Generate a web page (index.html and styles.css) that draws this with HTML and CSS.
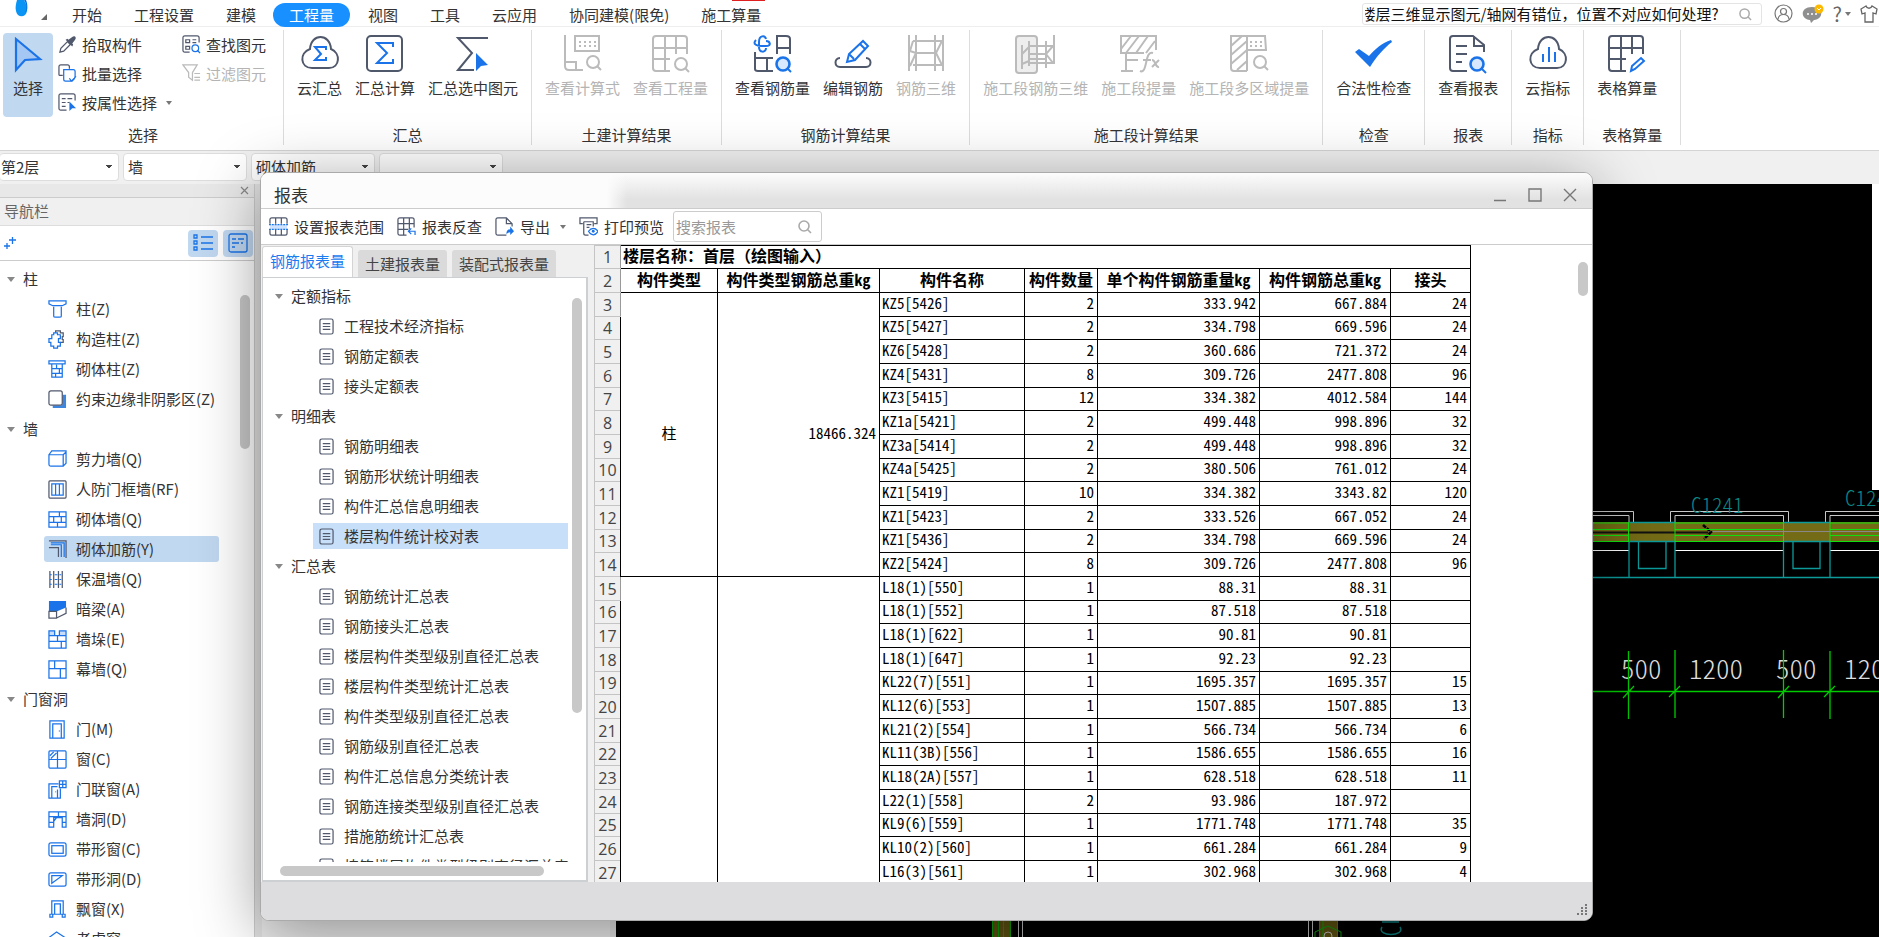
FILE: index.html
```html
<!DOCTYPE html>
<html lang="zh-CN">
<head>
<meta charset="utf-8">
<title>报表</title>
<link rel="stylesheet" href="styles.css">
</head>
<body>
<svg class="defs" aria-hidden="true">
  <symbol id="doc" viewBox="0 0 16 18"><rect x="1" y="1" width="14" height="16" rx="2" class="d"/><path class="d" d="M4 6h8M4 9h8M4 12h8"/></symbol>
  <symbol id="mag" viewBox="0 0 14 14"><circle cx="6" cy="6" r="5" fill="none" stroke="#aaa" stroke-width="1.6"/><path d="M9.5 9.5l3.500 3.500" stroke="#aaa" stroke-width="1.600"/></symbol>
</svg>
<div class="app">
  <header class="menubar">
    <svg class="logo" viewBox="0 0 50 26"><path d="M17 0h7c2 4 4 7 3 11-1 7-10 7-11 0-1-4 0-7 1-11z" fill="#0a95f5"/><path d="M24 0c3 5 3 9 1 13 3-3 3-8 1-13z" fill="#0a6fe0"/><path d="M47 14v6h-6z" fill="#666"/></svg>
    <nav class="menus">
      <a href="#">开始</a><a href="#">工程设置</a><a href="#">建模</a><a href="#" class="active">工程量</a><a href="#">视图</a><a href="#">工具</a><a href="#">云应用</a><a href="#">协同建模(限免)</a><a href="#" class="hot">施工算量</a>
    </nav>
    <label class="help"><input type="text" aria-label="帮助搜索" value="楼层三维显示图元/轴网有错位，位置不对应如何处理?"><svg width="13" height="13"><use href="#mag"/></svg></label>
    <div class="tools">
      <button aria-label="用户"><svg width="19" height="19" viewBox="0 0 19 19" fill="none" stroke="#777" stroke-width="1.200"><circle cx="9.500" cy="9.500" r="8.500"/><circle cx="9.500" cy="7.500" r="3"/><path d="M4 15c1-6 10-6 11 0"/></svg></button>
      <button aria-label="消息"><svg width="22" height="20" viewBox="0 0 22 20"><path d="M10 3c12 0 12 12 2 13l-3 3-1-3C-2 15-2 3 10 3z" fill="#8f8f8f"/><circle cx="6" cy="10" r="1" fill="#fff"/><circle cx="10" cy="10" r="1" fill="#fff"/><circle cx="14" cy="10" r="1" fill="#fff"/><circle cx="17" cy="5" r="4.500" fill="#fcb900"/><path d="M15 4l2 2 2-2" stroke="#fff" fill="none"/></svg></button>
      <button aria-label="帮助" class="q">?<i class="caret"></i></button>
      <button aria-label="皮肤"><svg width="18" height="18" viewBox="0 0 18 18" fill="none" stroke="#666" stroke-width="1.300"><path d="M6 1L1 4l1 5 3-1v9h8V8l3 1 1-5-5-3c-1 3-5 3-6 0z"/></svg></button>
    </div>
  </header>

  <section class="ribbon">
    <div class="group select">
      <div class="cols">
        <button class="big on"><svg viewBox="0 0 38 38"><path d="M7 2v31l9-10 15-1z" fill="#a4c8f3" stroke="#1a73e8" stroke-width="2.200"/></svg>选择</button>
        <div class="stack first">
          <button><svg viewBox="0 0 20 20"><path d="M2 18l1-4 7-7 3 3-7 7z" class="d"/><path d="M8 5l7 7 1-2-1-1 3-4c2-3-1-5-3-3l-4 3-1-1z" fill="#50586c"/></svg>拾取构件</button>
          <button><svg viewBox="0 0 20 20"><path class="d" d="M5 12H2q-1 0-1-1V3q0-2 2-2h7q2 0 2 2v2"/><path class="b" d="M6 6h10q2 0 2 2v5q0 3-3 5h-7q-2 0-2-2zM12 15l2 3 5-5"/></svg>批量选择</button>
          <button><svg viewBox="0 0 20 20"><path class="d" d="M9 18H3q-2 0-2-2V3q0-2 2-2h13q2 0 2 2v5M4 6h4M10 6h5M4 10h4M4 14h4M10 10h2"/><path d="M12 9v10l3-3h4z" fill="#1a73e8"/></svg>按属性选择<i class="caret"></i></button>
        </div>
        <div class="stack">
          <button><svg viewBox="0 0 20 20"><path class="d" d="M8 18H3q-2 0-2-2V3q0-2 2-2h13q2 0 2 2v5M4 5h4v3H4zM4 12h4v3H4zM11 5h4M11 8h4"/><circle cx="14" cy="14" r="3.500" class="b"/><path class="b" d="M16 16l3 3"/></svg>查找图元</button>
          <button disabled><svg viewBox="0 0 20 20"><path class="g" d="M1 1h15l-5 8v8l-4-3V9zM13 10h6M13 14h6M13 17h6"/></svg>过滤图元</button>
        </div>
      </div>
      <span>选择</span>
    </div>
    <div class="group">
      <div class="cols">
        <button class="big"><svg viewBox="0 0 38 38"><path class="d2" d="M9 15C10-1 29-1 30 15c10 4 9 19-2 19H11C-1 34-2 19 9 15z"/><path class="b2" d="M25 16v-3H14l6 7-6 6h11v-3"/></svg>云汇总</button>
        <button class="big"><svg viewBox="0 0 38 38"><rect class="d2" x="1" y="2" width="35" height="35" rx="4"/><path class="b2" d="M27 13V9H11l10 10-10 10h16v-4"/></svg>汇总计算</button>
        <button class="big"><svg viewBox="0 0 38 38"><path class="d2" d="M34 4H4l14 15L4 36h16"/><path d="M22 19l12 12-7 1-5 5z" fill="#1a73e8"/></svg>汇总选中图元</button>
      </div>
      <span>汇总</span>
    </div>
    <div class="group">
      <div class="cols">
        <button class="big" disabled><svg viewBox="0 0 38 38"><path class="g2" d="M1 1v31q0 4 4 4h14M1 28h11v8M11 2h24v15H11z"/><path stroke="#bbb" stroke-width="2" stroke-dasharray="2 3" d="M15 8h17M15 12h17"/><circle class="g2" cx="29" cy="28" r="6"/><path class="g2" d="M33 32l4 4"/></svg>查看计算式</button>
        <button class="big" disabled><svg viewBox="0 0 38 38"><path class="g2" d="M18 37H4q-3 0-3-3V5q0-3 3-3h28q3 0 3 3v15M1 14h34M1 25h17M13 2v35M24 2v18"/><circle class="g2" cx="29" cy="30" r="6"/><path class="g2" d="M33 34l4 4"/></svg>查看工程量</button>
      </div>
      <span>土建计算结果</span>
    </div>
    <div class="group">
      <div class="cols">
        <button class="big"><svg viewBox="0 0 38 38"><path class="b2" d="M12 5c-1-4-7-4-7 3v5c0 6 7 6 7 1M2 6c-4 4 1 6 5 6h5c6 0 4-5 0-5"/><path class="d2" d="M23 20V2h9q4 0 4 3v15M23 14h13M1 18v17q0 2 3 2h15M1 24h18M13 24v13"/><circle cx="29" cy="30" r="6.500" fill="#d8e8ff" stroke="#1a73e8" stroke-width="2.600"/><path class="b2" d="M33 34l4 4"/></svg>查看钢筋量</button>
        <button class="big"><svg viewBox="0 0 38 38"><path class="d2" d="M6 24c-6 0-6 9 0 9h26c6 0 6-9 0-9"/><path class="b2" d="M13 28l2-8L29 7l5 5-13 14zM26 10l5 5M15 20l5 5"/></svg>编辑钢筋</button>
        <button class="big" disabled><svg viewBox="0 0 38 38"><path class="g2" d="M2 1v36M9 1v36M28 1v36M36 1v36M6 7h29l-6 12 6 12H6M6 7l-3 10 6 2h19M3 32l6-13"/></svg>钢筋三维</button>
      </div>
      <span>钢筋计算结果</span>
    </div>
    <div class="group">
      <div class="cols">
        <button class="big" disabled><svg viewBox="0 0 38 38"><rect x="-1" y="2" width="21" height="37" rx="3" fill="#eee" stroke="#bbb" stroke-width="2"/><path class="g2" d="M5 11v24M12 7v25M29 7v27M37 1v29M12 12h24l-7 8 7 9H12M5 20l7-7M12 20h17M12 25h17M5 30l7-3"/></svg>施工段钢筋三维</button>
        <button class="big" disabled><svg viewBox="0 0 38 38"><path class="g2" d="M36 16V2H1v17h23M1 15L11 2M6 19L19 2M16 19L28 2M26 19l9-12M6 20v17M1 37h12M6 26h12"/><path class="g2" d="M33 19c-6-2-6 8-8 14-1 4-3 5-5 4M23 26h8M32 26c4 0 3 8 7 7M39 26l-7 7"/></svg>施工段提量</button>
        <button class="big" disabled><svg viewBox="0 0 38 38"><path class="g2" d="M17 37H4q-3 0-3-3V2h34l1 14H17M17 2v35M1 12L12 2M1 21L17 7M1 30l16-14M7 36l10-9"/><path stroke="#bbb" stroke-width="2" stroke-dasharray="2 3" d="M20 8h13M20 12h13"/><circle class="g2" cx="30" cy="28" r="6"/><path class="g2" d="M34 32l4 4"/></svg>施工段多区域提量</button>
      </div>
      <span>施工段计算结果</span>
    </div>
    <div class="group">
      <div class="cols"><button class="big"><svg viewBox="0 0 38 38"><path d="M0 18l4-3 10 7C20 15 27 9 36 6l1 2C29 14 22 22 15 33z" fill="#1a73e8"/></svg>合法性检查</button></div>
      <span>检查</span>
    </div>
    <div class="group">
      <div class="cols"><button class="big"><svg viewBox="0 0 38 38"><path class="d2" d="M18 37H4q-3 0-3-3V5q0-3 3-3h20l11 9v7M25 2v10h10M7 12h11M7 20h11M7 28h6"/><circle cx="28" cy="30" r="6.500" fill="#d8e8ff" stroke="#1a73e8" stroke-width="2.600"/><path class="b2" d="M32 34l5 5"/></svg>查看报表</button></div>
      <span>报表</span>
    </div>
    <div class="group">
      <div class="cols"><button class="big"><svg viewBox="0 0 38 38"><path class="d2" d="M9 15C10-1 29-1 30 15c10 4 9 19-2 19H11C-1 34-2 19 9 15z"/><path class="b2" d="M14 20v8M20 13v15M26 18v10"/></svg>云指标</button></div>
      <span>指标</span>
    </div>
    <div class="group last">
      <div class="cols"><button class="big"><svg viewBox="0 0 38 38"><path class="d2" d="M18 37H4q-3 0-3-3V5q0-3 3-3h28q3 0 3 3v15M1 14h34M1 25h17M13 2v35M24 2v18"/><path class="b2" d="M23 37l1-5 9-8 3 3-9 8z"/></svg>表格算量</button></div>
      <span>表格算量</span>
    </div>
  </section>

  <div class="combos">
    <select aria-label="楼层"><option>第2层</option></select>
    <select aria-label="构件类别"><option>墙</option></select>
    <select aria-label="构件类型"><option>砌体加筋</option></select>
    <select aria-label="构件"><option></option></select>
  </div>

  <main class="work">
    <aside class="nav">
      <div class="navtop"><button aria-label="关闭"><svg width="9" height="9" viewBox="0 0 9 9"><path d="M1 1l7 7M8 1L1 8" stroke="#888" stroke-width="1.200"/></svg></button></div>
      <h2>导航栏</h2>
      <div class="navbar">
        <svg width="14" height="16" viewBox="0 0 14 16"><path class="b" d="M6 5h7M9.500 2v7M1 11h6M4 8v6"/></svg>
        <button aria-label="列表"><svg width="22" height="20" viewBox="0 0 22 20"><path class="b" d="M2 2h3v3H2zM2 8h3v3H2zM2 14h3v3H2zM9 4h12M9 10h12M9 16h12"/></svg></button>
        <button aria-label="详情"><svg width="20" height="20" viewBox="0 0 20 20"><rect class="b" x="1" y="1" width="18" height="18" rx="2"/><path class="b" d="M4 6h4M10 6h6M4 10h7M13 10h2M4 14h3"/></svg></button>
      </div>
      <ul class="tree">
        <li class="head"><i class="caret"></i>柱</li>
        <li><svg viewBox="0 0 20 20"><path class="b" d="M1 1h18v3l-4 2H5L1 4zM6 7v10q0 1 2 1h4q2 0 2-1V7"/></svg>柱(Z)</li>
        <li><svg viewBox="0 0 20 20"><path class="d" d="M8 3V1h5v2h3v4h-1v3h1v3h-3"/><path class="b" d="M4 5h2V3h4v2h3v4h-2v4h2v4h-3v2H6v-2H3v-4H1V9h3z"/></svg>构造柱(Z)</li>
        <li><svg viewBox="0 0 20 20"><path class="b" d="M1 1h17v3H1zM4 4v14h11V4M4 9h11M4 14h11M9 5v4M12 9v5M8 14v4"/></svg>砌体柱(Z)</li>
        <li><svg viewBox="0 0 20 20"><path d="M5 16h10V5h4v14H5z" fill="#3d86df"/><rect x="1" y="1" width="14" height="15" rx="2" fill="#fff" stroke="#50586c" stroke-width="1.300"/></svg>约束边缘非阴影区(Z)</li>
        <li class="head"><i class="caret"></i>墙</li>
        <li><svg viewBox="0 0 20 20"><path class="b" d="M1 5l3-4h15v13l-3 3M1 5h15v12H3q-2 0-2-2zM16 5l3-3"/></svg>剪力墙(Q)</li>
        <li><svg viewBox="0 0 20 20"><rect class="d" x="1" y="1" width="18" height="18" rx="1"/><path class="b" d="M4 4h12v12H4zM8 4v12M12 4v12"/></svg>人防门框墙(RF)</li>
        <li><svg viewBox="0 0 20 20"><path class="b" d="M1 2h18v16H1zM1 7h18M1 13h18M12 2v5M6 7v6M14 7v6M10 13v5"/></svg>砌体墙(Q)</li>
        <li class="sel"><svg viewBox="0 0 20 20"><path class="d" d="M1 1h18v18M1 8h10v10"/><path class="b" d="M3 3h14v15M3 5h11v13"/></svg>砌体加筋(Y)</li>
        <li><svg viewBox="0 0 20 20"><path class="d" d="M2 1v18M6 1v18M11 1v18M15 1v18"/><path class="b" d="M2 5h2M2 10h2M2 15h2M7 5h3M7 10h3M7 15h3M12 5h2M12 10h2M12 15h2"/></svg>保温墙(Q)</li>
        <li><svg viewBox="0 0 20 20"><path d="M1 1h18v7l-10 4H1z" fill="#1a73e8"/><path class="d" d="M1 12h8v7H1zM9 19l10-5V8"/></svg>暗梁(A)</li>
        <li><svg viewBox="0 0 20 20"><path d="M1 1h6v5H1zM12 1h7v5h-7z" fill="#c7ddf8"/><path class="b" d="M1 1h6v5H1zM12 1h7v5h-7zM1 6v13h18V6M1 12h18M7 6h5M10 6v6M14 12v7"/></svg>墙垛(E)</li>
        <li><svg viewBox="0 0 20 20"><path class="b" d="M1 1h18v18H1zM1 9h18M7 1v8M13 9v10"/></svg>幕墙(Q)</li>
        <li class="head"><i class="caret"></i>门窗洞</li>
        <li><svg viewBox="0 0 20 20"><path class="b" d="M2 1h15v18H2zM5 19V4h9v15M12 11v1"/></svg>门(M)</li>
        <li><svg viewBox="0 0 20 20"><rect class="b" x="1" y="1" width="18" height="18" rx="1"/><path class="b" d="M10 1v18M1 10h18M2 6l4-4M3 9l6-6"/></svg>窗(C)</li>
        <li><svg viewBox="0 0 20 20"><path class="b" d="M11 4H1v15h12V9M4 19V7h6M10 10v9M8 12v1M12 1h7v7h-7zM15.500 1v7M12 4.500h7"/></svg>门联窗(A)</li>
        <li><svg viewBox="0 0 20 20"><path class="b" d="M1 2h18v16h-4V8H6v10H1zM1 7h18M11 2v5M1 13h5M15 13h4M9 8L6 12"/></svg>墙洞(D)</li>
        <li><svg viewBox="0 0 20 20"><rect class="b" x="1" y="3" width="18" height="14" rx="2"/><rect class="b" x="4" y="6" width="12" height="8"/></svg>带形窗(C)</li>
        <li><svg viewBox="0 0 20 20"><rect class="b" x="1" y="3" width="18" height="14" rx="2"/><path class="b" d="M4 6h11L4 14z"/></svg>带形洞(D)</li>
        <li><svg viewBox="0 0 20 20"><path class="b" d="M4 15V1h12v14M7 15V4h6v11M4 15h12M2 15h3v3H2zM15 15h3v3h-3z"/></svg>飘窗(X)</li>
        <li><svg viewBox="0 0 20 20"><path class="b" d="M1 8l8-6 9 6M4 8v10h11V8M7 9h5v5H7z"/></svg>老虎窗</li>
      </ul>
      <div class="bar navscroll"></div>
    </aside>
    <div class="dock"></div>
    <div class="canvas">
      <svg width="100%" height="100%"><g transform="translate(-616,-184)">
        <rect x="1593" y="522" width="290" height="20" fill="#736b15"/>
        <g fill="none" stroke="#c8c8c8" stroke-width="1">
          <path d="M1593 511.500h40.500V522M1593 515.500h36V522M1670.500 522v-10.500h118V522M1675 522v-6.500h108.500v6.500M1825.500 522v-10.500h60M1830 522v-6.500h55"/>
          <path stroke="#fff" d="M1593 550.500h36M1675 550.500h108M1830 550.500h55"/>
          <path stroke="#888" d="M1708 531.500h175"/>
        </g>
        <path d="M1593 532.500h115" stroke="#111" stroke-width="2"/><path d="M1703 525l8 7-7 7" stroke="#000" stroke-width="2.500" stroke-dasharray="4 1" fill="none"/>
        <g fill="none" stroke="#0c9a9a" stroke-width="1.300">
          <path d="M1593 577.500h290M1629 541v36M1675 541v36M1783.500 541v36M1830 541v36M1629 522.500h46M1629 541.500h46M1783 522.500h47M1783 541.500h47M1638.500 542v26.500h27.500V542M1793 542v26.500h27V542"/>
        </g>
        <path fill="none" stroke="#10e010" d="M1593 523h36M1593 529.500h36M1593 535.500h36M1593 541.500h36M1675 523h108M1675 529.500h108M1675 535.500h108M1675 541.500h108M1830 523h55M1830 529.500h55M1830 535.500h55M1830 541.500h55M1628.500 522v20M1675 522v20M1783.500 522v20M1830 522v20"/>
        <g class="cad"><text x="1691" y="513" class="cy">C1241</text><text x="1845" y="506" class="cy">C1241</text>
        <text x="1621" y="679">500</text><text x="1689" y="679">1200</text><text x="1776" y="679">500</text><text x="1844" y="679">1200</text></g>
        <path fill="none" stroke="#0c0" stroke-width="1.300" d="M1593 691.500h290M1628.500 651v68M1675 650v68M1783.500 650v68M1830 651v68M1623 698l11-12M1669 697l11-11M1778 698l11-12M1824 697l11-11"/>
        <path d="M992 921h19v16h-19zM1319 921h19v16h-19z" fill="#5c5011"/>
        <path d="M992.500 921v16M998.500 921v16M1003.500 921v16M1010.500 921v16M1319.500 921v16M1323 921v16M1337.500 921v16M1315 937v-5l13-6 13 6v5" stroke="#0a9a0a" fill="none"/>
        <path d="M1018.500 921v16M1022.500 921v16M1308.500 921v16M1312.500 921v16" stroke="#bbb"/>
        <circle cx="1328" cy="936" r="4" fill="none" stroke="#bbb"/>
        <path d="M1382 927c-6 10 24 10 18 0M1382 922h17" fill="none" stroke="#0b7e7e" stroke-width="1.500"/>
      </g></svg>
      <div class="panel"></div>
    </div>
  </main>
</div>

<section class="dialog" role="dialog" aria-label="报表">
  <header class="title"><h1>报表</h1>
    <div class="winbtns">
      <button aria-label="最小化"><svg viewBox="0 0 14 14"><path d="M1 12.500h12"/></svg></button>
      <button aria-label="最大化"><svg viewBox="0 0 14 14"><path d="M1 1h12v12H1z"/></svg></button>
      <button aria-label="关闭"><svg viewBox="0 0 14 14"><path d="M1 1l12 12M13 1L1 13"/></svg></button>
    </div>
  </header>
  <div class="toolbar">
    <button><svg viewBox="0 0 20 20"><path class="d" d="M1 7V3q0-2 2-2h14q2 0 2 2v4M1 13v4q0 2 2 2h14q2 0 2-2v-4M7 1v6M13 1v6M7 13v6M13 13v6"/><path d="M1 8h18v5H1z" fill="#cfe3ff"/><path class="b" stroke-dasharray="2 1" d="M0 8h20M0 13h20"/></svg>设置报表范围</button>
    <button><svg viewBox="0 0 20 20"><path class="d" d="M10 19H3q-2 0-2-2V3q0-2 2-2h13q2 0 2 2v8M1 7h17M1 13h11M7 1v18M13 1v12"/><path class="b" d="M19 19v-4h-7M15 12l-3 3 3 3"/></svg>报表反查</button>
    <button><svg viewBox="0 0 20 20"><path class="d" d="M12 19H3q-2 0-2-2V3q0-2 2-2h9l6 6v3M12 1v6h6"/><path d="M12 18c0-4 2-5 4-5v-3l4 5-4 4v-3c-2 0-3 1-4 2z" fill="#1a73e8"/></svg>导出<i class="caret"></i></button>
    <button><svg viewBox="0 0 20 20"><path class="d" d="M4 7H1V1h18v6h-3M5 5h10v5M5 5v12q0 2 2 2h3M8 8h5M8 11h3"/><path d="M10 15c3-4 7-4 10 0-3 5-7 5-10 0z" class="b"/><circle cx="15" cy="15" r="1.500" fill="#1a73e8"/></svg>打印预览</button>
    <label class="find"><input type="text" placeholder="搜索报表" aria-label="搜索报表"><svg width="14" height="14"><use href="#mag"/></svg></label>
  </div>
  <div class="body">
    <div class="left">
      <div class="tabs"><button class="cur">钢筋报表量</button><button>土建报表量</button><button>装配式报表量</button></div>
      <div class="reports">
        <ul class="tree">
          <li class="head"><i class="caret"></i>定额指标</li>
          <li><svg><use href="#doc"/></svg>工程技术经济指标</li>
          <li><svg><use href="#doc"/></svg>钢筋定额表</li>
          <li><svg><use href="#doc"/></svg>接头定额表</li>
          <li class="head"><i class="caret"></i>明细表</li>
          <li><svg><use href="#doc"/></svg>钢筋明细表</li>
          <li><svg><use href="#doc"/></svg>钢筋形状统计明细表</li>
          <li><svg><use href="#doc"/></svg>构件汇总信息明细表</li>
          <li class="sel"><svg><use href="#doc"/></svg>楼层构件统计校对表</li>
          <li class="head"><i class="caret"></i>汇总表</li>
          <li><svg><use href="#doc"/></svg>钢筋统计汇总表</li>
          <li><svg><use href="#doc"/></svg>钢筋接头汇总表</li>
          <li><svg><use href="#doc"/></svg>楼层构件类型级别直径汇总表</li>
          <li><svg><use href="#doc"/></svg>楼层构件类型统计汇总表</li>
          <li><svg><use href="#doc"/></svg>构件类型级别直径汇总表</li>
          <li><svg><use href="#doc"/></svg>钢筋级别直径汇总表</li>
          <li><svg><use href="#doc"/></svg>构件汇总信息分类统计表</li>
          <li><svg><use href="#doc"/></svg>钢筋连接类型级别直径汇总表</li>
          <li><svg><use href="#doc"/></svg>措施筋统计汇总表</li>
          <li><svg><use href="#doc"/></svg>植筋楼层构件类型级别直径汇总表</li>
        </ul>
        <div class="bar vbar"></div><div class="bar hbar"></div>
      </div>
    </div>
    <div class="sheet">
      <table>
        <colgroup><col class="c0"><col class="c1"><col class="c2"><col class="c3"><col class="c4"><col class="c2"><col class="c5"><col class="c6"></colgroup>
        <tbody>
        <tr><th class="n">1</th><th colspan="7" class="l cap">楼层名称：首层（绘图输入）</th></tr>
        <tr><th class="n">2</th><th>构件类型</th><th>构件类型钢筋总重kg</th><th>构件名称</th><th>构件数量</th><th>单个构件钢筋重量kg</th><th>构件钢筋总重kg</th><th>接头</th></tr>
        <tr><th class="n">3</th><td rowspan="12" class="kind">柱</td><td rowspan="12">18466.324</td><td class="l">KZ5[5426]</td><td>2</td><td>333.942</td><td>667.884</td><td>24</td></tr>
        <tr><th class="n">4</th><td class="l">KZ5[5427]</td><td>2</td><td>334.798</td><td>669.596</td><td>24</td></tr>
        <tr><th class="n">5</th><td class="l">KZ6[5428]</td><td>2</td><td>360.686</td><td>721.372</td><td>24</td></tr>
        <tr><th class="n">6</th><td class="l">KZ4[5431]</td><td>8</td><td>309.726</td><td>2477.808</td><td>96</td></tr>
        <tr><th class="n">7</th><td class="l">KZ3[5415]</td><td>12</td><td>334.382</td><td>4012.584</td><td>144</td></tr>
        <tr><th class="n">8</th><td class="l">KZ1a[5421]</td><td>2</td><td>499.448</td><td>998.896</td><td>32</td></tr>
        <tr><th class="n">9</th><td class="l">KZ3a[5414]</td><td>2</td><td>499.448</td><td>998.896</td><td>32</td></tr>
        <tr><th class="n">10</th><td class="l">KZ4a[5425]</td><td>2</td><td>380.506</td><td>761.012</td><td>24</td></tr>
        <tr><th class="n">11</th><td class="l">KZ1[5419]</td><td>10</td><td>334.382</td><td>3343.82</td><td>120</td></tr>
        <tr><th class="n">12</th><td class="l">KZ1[5423]</td><td>2</td><td>333.526</td><td>667.052</td><td>24</td></tr>
        <tr><th class="n">13</th><td class="l">KZ1[5436]</td><td>2</td><td>334.798</td><td>669.596</td><td>24</td></tr>
        <tr><th class="n">14</th><td class="l">KZ2[5424]</td><td>8</td><td>309.726</td><td>2477.808</td><td>96</td></tr>
        <tr><th class="n">15</th><td rowspan="13"></td><td rowspan="13"></td><td class="l">L18(1)[550]</td><td>1</td><td>88.31</td><td>88.31</td><td></td></tr>
        <tr><th class="n">16</th><td class="l">L18(1)[552]</td><td>1</td><td>87.518</td><td>87.518</td><td></td></tr>
        <tr><th class="n">17</th><td class="l">L18(1)[622]</td><td>1</td><td>90.81</td><td>90.81</td><td></td></tr>
        <tr><th class="n">18</th><td class="l">L18(1)[647]</td><td>1</td><td>92.23</td><td>92.23</td><td></td></tr>
        <tr><th class="n">19</th><td class="l">KL22(7)[551]</td><td>1</td><td>1695.357</td><td>1695.357</td><td>15</td></tr>
        <tr><th class="n">20</th><td class="l">KL12(6)[553]</td><td>1</td><td>1507.885</td><td>1507.885</td><td>13</td></tr>
        <tr><th class="n">21</th><td class="l">KL21(2)[554]</td><td>1</td><td>566.734</td><td>566.734</td><td>6</td></tr>
        <tr><th class="n">22</th><td class="l">KL11(3B)[556]</td><td>1</td><td>1586.655</td><td>1586.655</td><td>16</td></tr>
        <tr><th class="n">23</th><td class="l">KL18(2A)[557]</td><td>1</td><td>628.518</td><td>628.518</td><td>11</td></tr>
        <tr><th class="n">24</th><td class="l">L22(1)[558]</td><td>2</td><td>93.986</td><td>187.972</td><td></td></tr>
        <tr><th class="n">25</th><td class="l">KL9(6)[559]</td><td>1</td><td>1771.748</td><td>1771.748</td><td>35</td></tr>
        <tr><th class="n">26</th><td class="l">KL10(2)[560]</td><td>1</td><td>661.284</td><td>661.284</td><td>9</td></tr>
        <tr><th class="n">27</th><td class="l">L16(3)[561]</td><td>1</td><td>302.968</td><td>302.968</td><td>4</td></tr>
        </tbody>
      </table>
      <div class="bar sbar"></div>
    </div>
  </div>
  <footer><svg width="14" height="14" viewBox="0 0 14 14"><path d="M10 2h2M10 5h2M6 5h2M10 8h2M6 8h2M6 11h2M10 11h2M2 11h2" stroke="#777" stroke-width="2"/></svg></footer>
</section>
</body>
</html>
```
FILE: styles.css
```css
* { box-sizing: border-box; }
html, body { height: 100%; }
body {
  margin: 0;
  overflow: hidden;
  position: relative;
  font: 15px/20px "Noto Sans CJK SC", sans-serif;
  color: #333;
}
button {
  font: inherit;
  color: inherit;
  border: 0;
  background: none;
  padding: 0;
  white-space: nowrap;
}
ul { list-style: none; margin: 0; padding: 0; }
h1, h2 { margin: 0; font: inherit; }
.defs { position: absolute; width: 0; height: 0; }
.d, .b, .g, .d2, .b2, .g2 { fill: none; stroke-width: 1.3; stroke: #50586c; }
.b, .b2 { stroke: #1a73e8; }
.g, .g2 { stroke: #bbb; }
.d2, .b2, .g2 { stroke-width: 2; }
.caret {
  flex: none;
  width: 0;
  height: 0;
  border: 3px solid transparent;
  border-top: 4px solid #777;
  border-bottom: 0;
}

.app { height: 100%; display: flex; flex-direction: column; background: #f0f0f0; }
.menubar {
  height: 27px;
  flex: none;
  display: flex;
  align-items: flex-start;
  background: #fff;
  border-bottom: 1px solid #eee;
}
.logo { width: 50px; height: 26px; margin-right: 6px; flex: none; }
.menus { display: flex; flex: 1; padding-top: 3px; }
.menus a {
  padding: 0 16px;
  line-height: 24px;
  color: #333;
  text-decoration: none;
  white-space: nowrap;
}
.menus .active { background: #1890ff; color: #fff; border-radius: 12px; margin: 0 2px 0 1px; }
.menus .hot { position: relative; }
.menus .hot::before {
  content: "";
  position: absolute;
  top: -3px;
  right: 12px;
  width: 33px;
  height: 1px;
  background: #e02020;
}
.help {
  width: 400px;
  height: 22px;
  margin-top: 3px;
  display: flex;
  align-items: center;
  padding: 0 9px 0 2px;
  border: 1px solid #e4e4e4;
  border-radius: 3px;
}
.help input, .find input {
  flex: 1;
  min-width: 0;
  border: 0;
  outline: 0;
  padding: 0;
  background: none;
  font: inherit;
  color: #111;
}
.help input { text-indent: -4px; height: 20px; }
.tools { display: flex; align-items: center; gap: 9px; height: 27px; margin: 0 1px 0 12px; }
.tools button { display: flex; align-items: center; }
.tools .q { font-size: 20px; color: #666; gap: 3px; }

.ribbon {
  flex: none;
  display: flex;
  background: #fff;
  padding: 3px 0 5px;
  border-bottom: 1px solid #d4d4d4;
}
.group {
  display: flex;
  flex-direction: column;
  justify-content: space-between;
  min-height: 115px;
  padding: 0 13px;
  border-right: 1px solid #ddd;
}
.group > span { text-align: center; }
.group.last { width: 97px; }
.cols { display: flex; gap: 13px; }
.group.select { width: 284px; padding: 0 0 0 3px; }
.select .cols { gap: 5px; }
.big { display: flex; flex-direction: column; align-items: center; gap: 6px; padding-top: 4px; }
.big svg { width: 38px; height: 38px; overflow: visible; }
.big.on {
  width: 50px;
  height: 84px;
  margin-top: 3px;
  gap: 3px;
  background: #c1d8f1;
  border-radius: 4px;
}
.group button:disabled { color: #b4b4b4; }
.stack { display: flex; flex-direction: column; }
.stack.first { width: 119px; }
.stack button { display: flex; align-items: center; height: 29px; gap: 5px; }
.stack svg { width: 19px; height: 19px; flex: none; }
.stack .caret { margin-left: 4px; }

.combos { flex: none; display: flex; gap: 4px; padding: 2px 0 3px; }
.combos select {
  appearance: none;
  width: 124px;
  height: 28px;
  margin: 0;
  padding: 0 4px 1px;
  border: 1px solid #ddd;
  border-radius: 4px;
  font: inherit;
  color: #333;
  background-color: #fff;
  background-image: linear-gradient(to bottom left, #444 50%, transparent 52%), linear-gradient(to bottom right, #444 50%, transparent 52%);
  background-repeat: no-repeat;
  background-size: 3px 4px, 3px 4px;
  background-position: right 9px center, right 6px center;
}
.combos select:first-child { width: 119px; border-left: 0; padding-left: 1px; }

.work { flex: 1; min-height: 0; display: flex; }
.nav {
  position: relative;
  width: 255px;
  flex: none;
  display: flex;
  flex-direction: column;
  background: #fff;
  border-right: 1px solid #ccc;
  overflow: hidden;
}
.navtop {
  height: 14px;
  flex: none;
  display: flex;
  justify-content: flex-end;
  align-items: center;
  padding-right: 5px;
  background: #e8e8e8;
  border-bottom: 1px solid #ccc;
}
.navtop button { display: flex; }
.nav h2 {
  flex: none;
  background: #f0f0f0;
  border-bottom: 1px solid #ddd;
  padding: 3px 4px 4px;
  color: #666;
}
.navbar {
  flex: none;
  height: 35px;
  display: flex;
  align-items: center;
  gap: 5px;
  padding: 0 1px 0 3px;
  border-bottom: 1px solid #ccc;
}
.navbar > svg { margin-right: auto; }
.navbar button {
  width: 30px;
  height: 27px;
  display: flex;
  align-items: center;
  justify-content: center;
  background: #c1d8f1;
  border-radius: 4px;
}
.tree li {
  display: flex;
  align-items: center;
  height: 26px;
  margin: 2px 0 4px;
  white-space: nowrap;
}
.tree .caret { border-width: 5px 4px 0; border-top-color: #888; }
.nav .tree { flex: 1; min-height: 0; padding: 3px 0; }
.nav .tree li { margin-left: 44px; padding-left: 4px; gap: 9px; width: 175px; border-radius: 3px; }
.nav .tree svg { width: 19px; height: 19px; flex: none; }
.nav .tree .head, .reports .tree .head { margin-left: 0; padding-left: 7px; gap: 8px; }
.nav .tree .sel { background: #c1d8f1; }
.bar { position: absolute; background: #c8c8c8; border-radius: 5px; width: 10px; }
.navscroll { right: 4px; top: 111px; height: 154px; }
.dock { width: 361px; flex: none; border: solid #e2e2e2; border-width: 0 6px 0 7px; background: #ececec; }
.canvas { position: relative; flex: 1; min-width: 0; background: #000; overflow: hidden; }
.canvas svg { display: block; }
.canvas .panel { position: absolute; right: 0; top: 0; width: 7px; height: 306px; background: #fff; }
.cad { font: 300 27px "Noto Sans CJK SC", sans-serif; font-feature-settings: "hwid"; fill: #ddd; }
.cad .cy { font-size: 21px; fill: #0b8585; }

.dialog {
  position: absolute;
  left: 260px;
  right: 286px;
  top: 172px;
  bottom: 16px;
  display: flex;
  flex-direction: column;
  background: #fff;
  border: 1px solid #aaa;
  border-radius: 9px;
  overflow: hidden;
  box-shadow: 0 12px 64px rgba(0, 0, 0, .4);
}
.title {
  height: 36px;
  flex: none;
  display: flex;
  justify-content: space-between;
  align-items: center;
  padding: 8px 15px 0 13px;
  border-bottom: 1px solid #ccc;
  background: linear-gradient(to right, #fcfcfc 346px, rgba(252, 252, 252, 0) 366px), linear-gradient(#fcfcfc, #e2e2e2 75%);
}
.title h1 { font-size: 17px; }
.winbtns { display: flex; gap: 21px; }
.winbtns button { display: flex; }
.winbtns svg { width: 14px; height: 14px; fill: none; stroke: #777; stroke-width: 1.4; }
.toolbar {
  height: 36px;
  flex: none;
  display: flex;
  align-items: center;
  gap: 13px;
  padding-left: 8px;
  border-bottom: 1px solid #ccc;
}
.toolbar button { display: flex; align-items: center; gap: 6px; }
.toolbar button svg { width: 19px; height: 19px; }
.toolbar .caret { margin-left: 4px; }
.find {
  width: 149px;
  height: 31px;
  margin-left: -4px;
  display: flex;
  align-items: center;
  padding: 0 9px 0 2px;
  border: 1px solid #ccc;
  border-radius: 3px;
}
.find input::placeholder { color: #999; opacity: 1; }

.body { flex: 1; min-height: 0; display: flex; }
.left { width: 333px; flex: none; display: flex; flex-direction: column; padding: 0 6px 0 1px; background: #f0f0f0; }
.tabs { display: flex; align-items: flex-end; gap: 5px; height: 32px; flex: none; }
.tabs button { background: #dadada; height: 27px; padding: 0 7px; color: #444; border-radius: 3px 3px 0 0; }
.tabs .cur { background: #fff; color: #1a7cf0; height: 31px; padding-bottom: 2px; border: 1px solid #d4d4d4; border-bottom: 0; }
.reports {
  position: relative;
  flex: 1;
  min-height: 0;
  background: #fff;
  border: solid #ccd0d2;
  border-width: 1px 2px 2px 1px;
  padding: 3px 0 18px;
}
.reports .tree { height: 100%; overflow: hidden; }
.reports .tree li { margin-left: 50px; padding-left: 6px; gap: 10px; width: 255px; }
.reports .tree .head { padding-left: 12px; }
.reports .tree svg { width: 15px; height: 17px; flex: none; }
.reports .sel { background: #c7dff9; }
.vbar { right: 4px; top: 20px; height: 415px; }
.hbar { left: 17px; bottom: 4px; width: 264px; height: 10px; }

.sheet { position: relative; flex: 1; min-width: 0; overflow: hidden; }
table { border-collapse: collapse; table-layout: fixed; width: 876px; }
.c0 { width: 26px; }
.c1 { width: 97px; }
.c2 { width: 162px; }
.c3 { width: 145px; }
.c4 { width: 73px; }
.c5 { width: 131px; }
.c6 { width: 80px; }
tr { height: 24px; }
tr:nth-child(3n+1) { height: 23px; }
td, th {
  border: 1px solid #000;
  padding: 0 3px 4px;
  font-size: 15px;
  line-height: 18px;
  color: #000;
  text-align: right;
  white-space: nowrap;
  font-feature-settings: "hwid";
}
td.l { padding-left: 2px; }
th { font-size: 16px; text-align: center; font-weight: 700; }
.l { text-align: left; }
.cap { padding-left: 2px; font-feature-settings: "fwid"; }
.kind { text-align: center; }
th.n {
  font: 16px/18px "Open Sans", sans-serif;
  color: #444;
  background: #f0f0f0;
  border-color: #c4c4c4;
  border-right-color: #999;
  padding: 0;
}
.sbar { right: 4px; top: 17px; height: 34px; }
footer {
  height: 38px;
  flex: none;
  display: flex;
  justify-content: flex-end;
  align-items: flex-end;
  padding: 3px;
  background: #dddddf;
}
```
